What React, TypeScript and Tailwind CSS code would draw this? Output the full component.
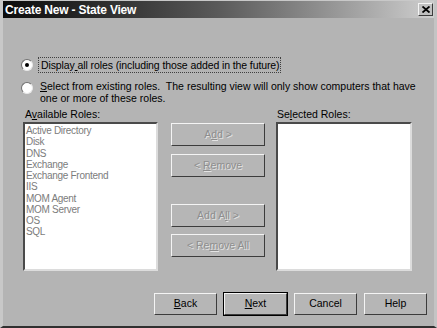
import React from 'react';

const roles = [
  'Active Directory',
  'Disk',
  'DNS',
  'Exchange',
  'Exchange Frontend',
  'IIS',
  'MOM Agent',
  'MOM Server',
  'OS',
  'SQL',
];

const raised =
  'border border-t-[#f4f4f4] border-l-[#f4f4f4] border-r-[#3c3c3c] border-b-[#3c3c3c]';
const sunken =
  'border-2 border-t-[#4a4a4a] border-l-[#4a4a4a] border-r-[#dcdcdc] border-b-[#dcdcdc]';

const SideButton: React.FC<{ children: React.ReactNode }> = ({ children }) => (
  <div
    className={`w-[94px] h-[23px] flex items-center justify-center whitespace-pre bg-[#b6b6b6] text-[#8e8e8e] [text-shadow:1px_1px_0_#e4e4e4] ${raised}`}
  >
    <span>{children}</span>
  </div>
);

const Radio: React.FC<{ checked?: boolean }> = ({ checked }) => (
  <div className="w-[12px] h-[12px] rounded-full bg-white border border-t-[#707070] border-l-[#707070] border-r-[#e8e8e8] border-b-[#e8e8e8] flex items-center justify-center shrink-0">
    {checked && <div className="w-[4px] h-[4px] rounded-full bg-black" />}
  </div>
);

const FooterButton: React.FC<{ children: React.ReactNode; isDefault?: boolean }> = ({
  children,
  isDefault,
}) => (
  <div
    className={`w-[63px] h-[22px] flex items-center justify-center bg-[#b6b6b6] text-black ${
      isDefault ? 'outline outline-1 outline-black ' : ''
    }${raised}`}
  >
    <span>{children}</span>
  </div>
);

export default function App() {
  return (
    <div
      className="w-[437px] h-[328px] bg-[#b4b4b4] border-l-[3px] border-l-[#c8c8c8] border-t border-t-[#c8c8c8] border-r-[3px] border-r-[#c4c4c4] border-b-[2px] border-b-[#303030] flex flex-col text-[10.5px] text-black"
      style={{ fontFamily: '"Liberation Sans", Arial, sans-serif' }}
    >
      {/* title bar */}
      <div className="h-[17px] flex items-center justify-between pl-[2px] pr-[1px] bg-gradient-to-r from-[#0c0c0c] via-[#5a5a5a] to-[#cfcfcf]">
        <span className="text-white font-bold text-[12px] tracking-[-0.2px]">Create New - State View</span>
        <div className={`w-[15px] h-[13px] flex items-center justify-center bg-[#c0c0c0] ${raised}`}>
          <svg width="8" height="7" viewBox="0 0 8 7">
            <path d="M0.5 0.5 L7.5 6.5 M7.5 0.5 L0.5 6.5" stroke="#000" strokeWidth="1.8" />
          </svg>
        </div>
      </div>

      <div className="flex flex-col pl-[18px] pt-[39px]">
        {/* radio 1 */}
        <div className="flex items-center gap-[5px]">
          <Radio checked />
          <div className="w-[243px] h-[16px] border border-dotted border-[#404040] px-[2px] leading-[14px] whitespace-nowrap tracking-[-0.1px]">
            Display<span className="underline"> </span>all roles (including those added in the future)
          </div>
        </div>

        {/* radio 2 */}
        <div className="flex items-start gap-[6px] mt-[9px]">
          <Radio />
          <div className="leading-[12px] -mt-[2px] pl-[1px] whitespace-nowrap">
            <span className="underline">S</span>elect from existing roles.&nbsp; The resulting view will only show computers that have
            <br />
            one or more of these roles.
          </div>
        </div>

        {/* lists */}
        <div className="flex mt-[4px] ml-[2px]">
          <div className="flex flex-col">
            <div className="pl-[2px] leading-[12px] h-[14px]">
              A<span className="underline">v</span>ailable Roles:
            </div>
            <div className={`w-[135px] h-[149px] bg-white ${sunken} pt-[1px] pl-[1px] text-[#7c7c7c] text-[10px] tracking-[-0.3px] leading-[11.25px]`}>
              {roles.map((r) => (
                <div key={r}>{r}</div>
              ))}
            </div>
          </div>

          <div className="flex flex-col ml-[13px] pt-[15px]">
            <SideButton>
              A<span className="underline">d</span>d &gt;
            </SideButton>
            <div className="mt-[8px]">
              <SideButton>
                &lt; <span className="underline">R</span>emove
              </SideButton>
            </div>
            <div className="mt-[27px]">
              <SideButton>
                Add A<span className="underline">l</span>l &gt;
              </SideButton>
            </div>
            <div className="mt-[7px]">
              <SideButton>
                &lt; Re<span className="underline">m</span>ove All
              </SideButton>
            </div>
          </div>

          <div className="flex flex-col ml-[11px]">
            <div className="pl-[1px] leading-[12px] h-[14px]">
              Se<span className="underline">l</span>ected Roles:
            </div>
            <div className={`w-[136px] h-[149px] bg-white ${sunken}`} />
          </div>
        </div>
      </div>

      {/* footer */}
      <div className="flex gap-[7px] ml-[151px] mt-[22px]">
        <FooterButton>
          <span className="underline">B</span>ack
        </FooterButton>
        <FooterButton isDefault>
          <span className="underline">N</span>ext
        </FooterButton>
        <FooterButton>Cancel</FooterButton>
        <FooterButton>Help</FooterButton>
      </div>
    </div>
  );
}
